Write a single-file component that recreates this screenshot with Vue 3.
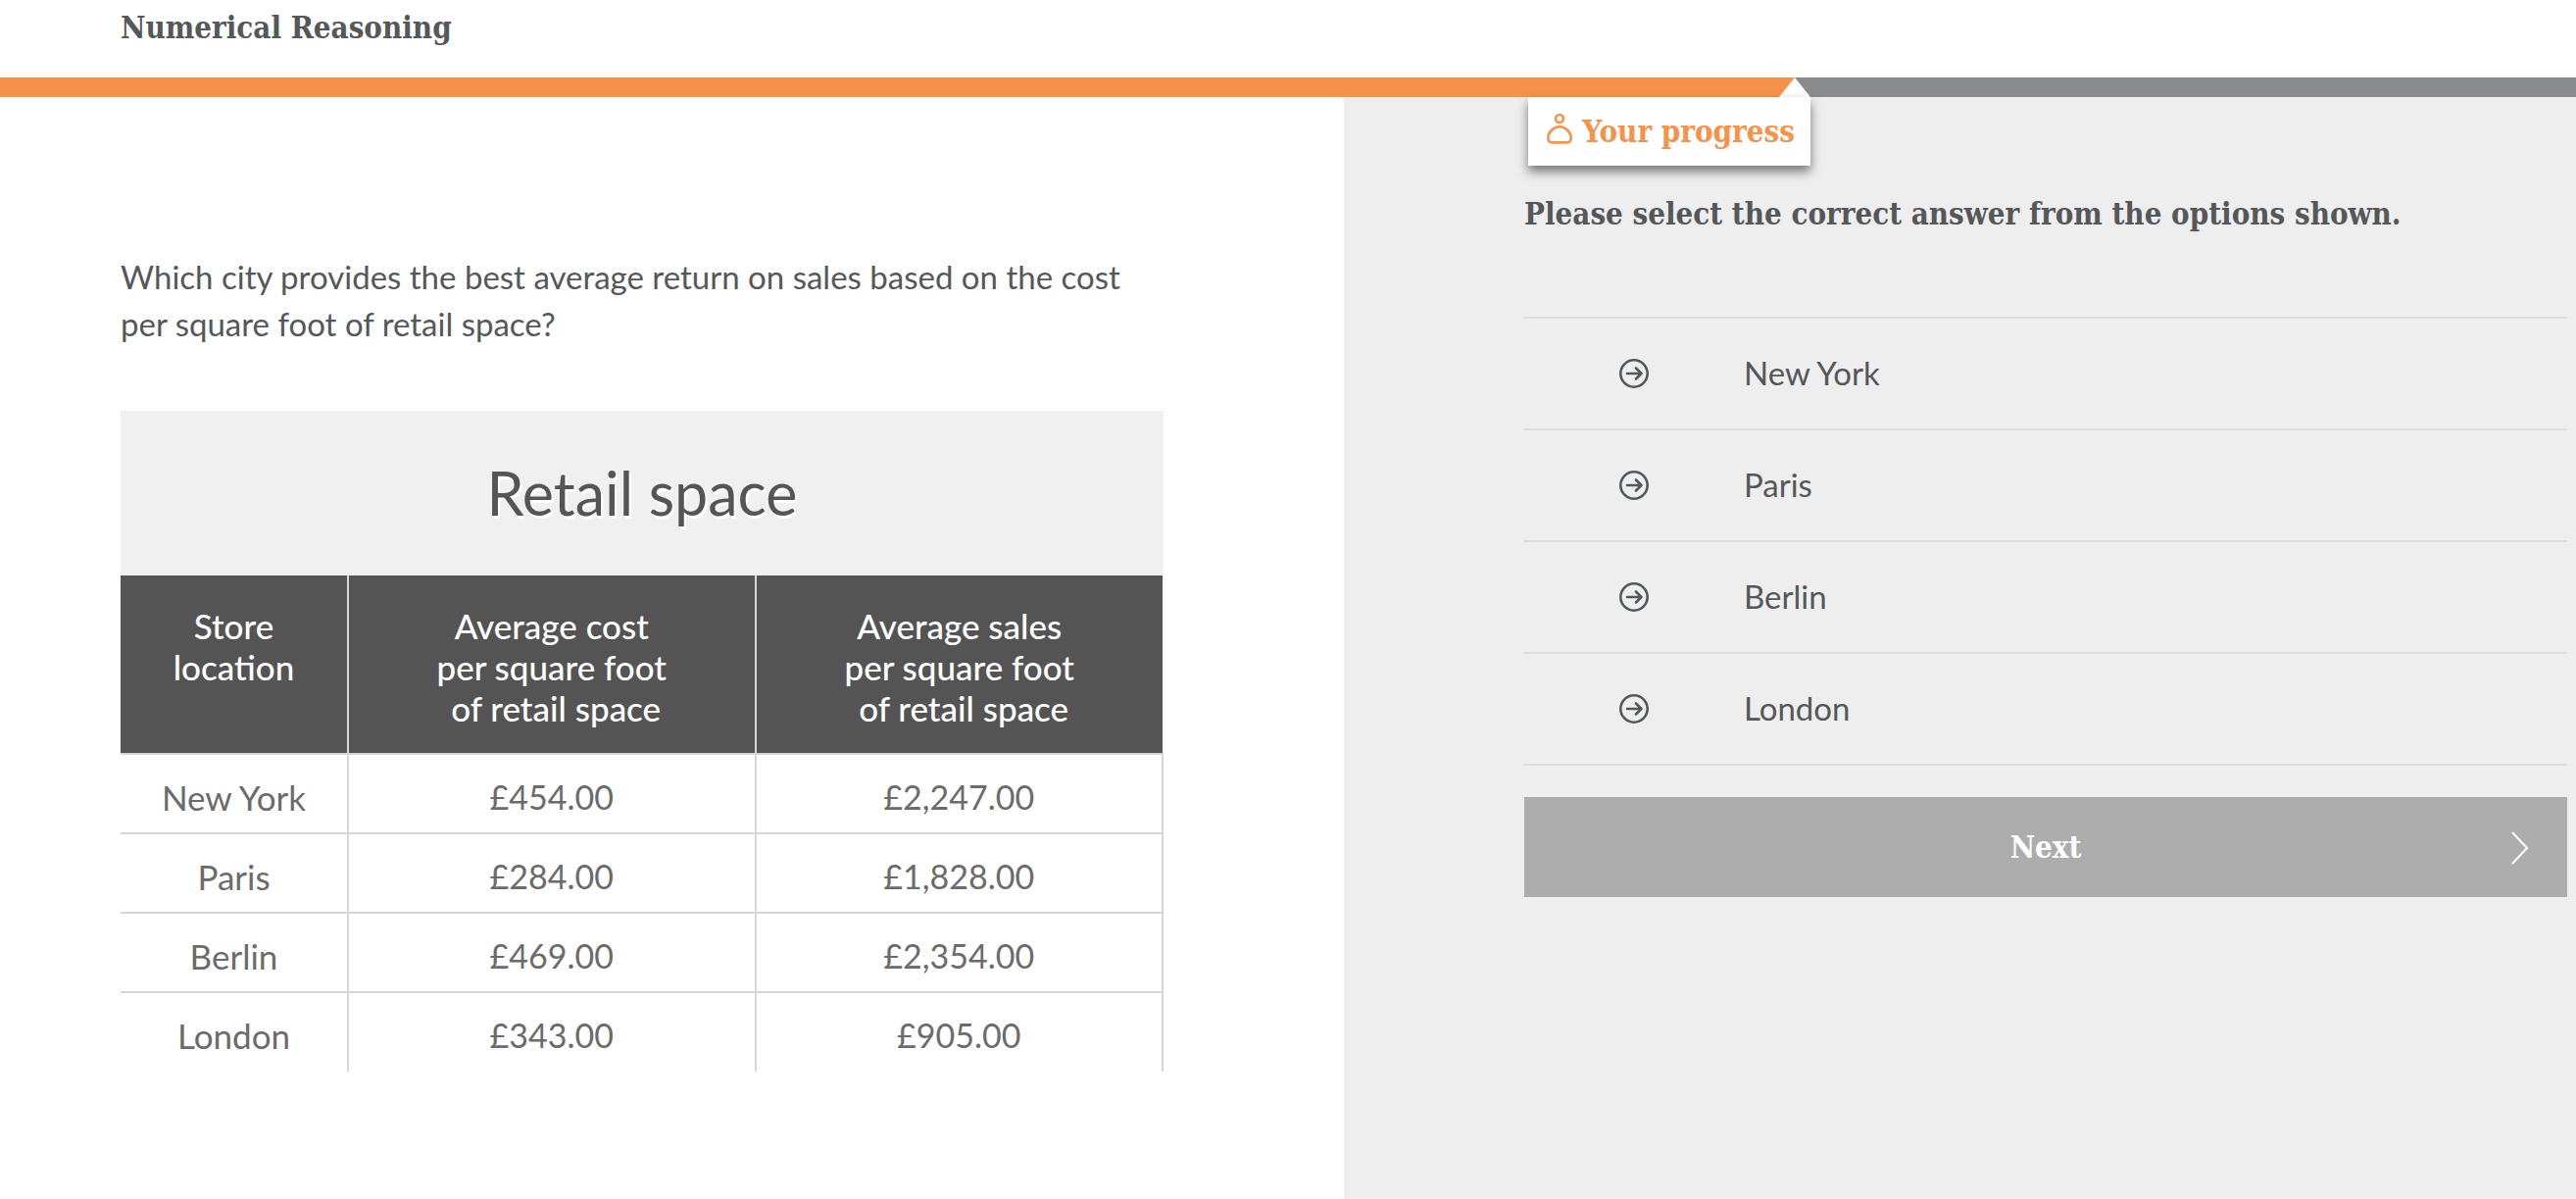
<template>
    <div class="test">
        <header class="test__header">
            <h1 class="test__title">Numerical Reasoning</h1>
        </header>

        <div class="progress" role="progressbar" aria-label="Your progress" :aria-valuenow="progress">
            <div class="progress__fill" :style="{ width: `${progress}%` }">
                <svg class="progress__pointer" viewBox="0 0 32 20" aria-hidden="true">
                    <path d="M0 20 L16 0 L32 20 Z" fill="#fff" />
                </svg>
                <div class="progress__tip">
                    <svg class="progress__icon" viewBox="0 0 28 32" aria-hidden="true">
                        <circle cx="14" cy="6" r="4" />
                        <path d="M14 14.3 C20 14.3 25.7 19.5 25.7 26 C25.7 29 24.3 30.4 21.5 30.4 H6.5 C3.7 30.4 2.3 29 2.3 26 C2.3 19.5 8 14.3 14 14.3 Z" />
                    </svg>
                    <span>Your progress</span>
                </div>
            </div>
        </div>

        <main class="test__body">
            <section class="question">
                <p class="question__text">
                    Which city provides the best average return on sales based on the cost<br />
                    per square foot of retail space?
                </p>

                <table class="data">
                    <caption class="data__caption">Retail space</caption>
                    <thead>
                        <tr>
                            <th class="data__place" scope="col">Store<br />location</th>
                            <th scope="col">Average cost<br />per square foot<br />&nbsp;of retail space</th>
                            <th scope="col">Average sales<br />per square foot<br />&nbsp;of retail space</th>
                        </tr>
                    </thead>
                    <tbody>
                        <tr v-for="store in stores" :key="store.city">
                            <td class="data__city">{{ store.city }}</td>
                            <td>{{ store.cost }}</td>
                            <td>{{ store.sales }}</td>
                        </tr>
                    </tbody>
                </table>
            </section>

            <form class="answers" @submit.prevent>
                <h2 class="answers__title">Please select the correct answer from the options shown.</h2>

                <ul class="answers__list">
                    <li v-for="store in stores" :key="store.city" class="answers__item">
                        <label class="option">
                            <span class="option__mark">
                                <input v-model="selected" class="option__input" type="radio" name="answer" :value="store.city" />
                                <svg class="option__icon" viewBox="0 0 30 30" aria-hidden="true">
                                    <circle cx="15" cy="15" r="13.7" />
                                    <path d="M8 15 H22.5 M17 9.5 L22.5 15 L17 20.5" />
                                </svg>
                            </span>
                            <span class="option__text">{{ store.city }}</span>
                        </label>
                    </li>
                </ul>

                <button class="next" type="submit">
                    <span>Next</span>
                    <svg class="next__icon" viewBox="0 0 18 34" aria-hidden="true">
                        <path d="M1 1 L16 17 L1 33" />
                    </svg>
                </button>
            </form>
        </main>
    </div>
</template>

<script setup>
import { ref } from 'vue'

const progress = ref(69.67)
const selected = ref('')

const stores = [
    { city: 'New York', cost: '£454.00', sales: '£2,247.00' },
    { city: 'Paris', cost: '£284.00', sales: '£1,828.00' },
    { city: 'Berlin', cost: '£469.00', sales: '£2,354.00' },
    { city: 'London', cost: '£343.00', sales: '£905.00' }
]
</script>

<style>
body {
    margin: 0;
    background: #fff;
}
</style>

<style scoped>
.test {
    display: flex;
    flex-direction: column;
    min-height: 100vh;
    font-family: 'Lato', 'Open Sans', sans-serif;
    font-size: 33px;
    line-height: 48px;
    color: #54585a;
}

.test__header {
    height: 79px;
    padding-left: 123px;
    box-sizing: border-box;
}

.test__title,
.answers__title {
    margin: 0;
    font-family: 'DejaVu Serif Condensed', 'DejaVu Serif', serif;
    font-size: 31px;
    font-weight: bold;
    line-height: 56px;
}

.progress {
    height: 20px;
    background: #8a8b8c;
}

.progress__fill {
    position: relative;
    height: 20px;
    background: #f7924a;
}

.progress__pointer {
    position: absolute;
    top: 0;
    right: -16px;
    width: 32px;
    height: 20px;
}

/* The tip hangs below the bar, over the answers panel */
.progress__tip {
    position: absolute;
    top: 20px;
    right: -16px;
    z-index: 1;
    display: flex;
    align-items: center;
    gap: 9px;
    height: 70px;
    padding: 0 16px 0 18px;
    box-sizing: border-box;
    background: #fff;
    box-shadow: 0 6px 10px rgba(0, 0, 0, 0.5);
    font-family: 'DejaVu Serif Condensed', 'DejaVu Serif', serif;
    font-size: 31px;
    font-weight: bold;
    white-space: nowrap;
    color: #f7924a;
}

.progress__icon {
    width: 28px;
    height: 32px;
    margin-bottom: 6px;
    fill: none;
    stroke: #f7924a;
    stroke-width: 2.6;
}

.test__body {
    flex: 1;
    display: grid;
    grid-template-columns: 1371fr 1257fr;
}

.question {
    padding: 159px 184px 40px 123px;
}

.question__text {
    margin: 0 0 65px;
    white-space: nowrap;
}

.data {
    width: 100%;
    table-layout: fixed;
    border-collapse: collapse;
    font-size: 34px;
    text-align: center;
    color: #6b6b6b;
}

.data__caption {
    padding: 54px 0;
    background: #f0f0f0;
    font-size: 61px;
    line-height: 60px;
    text-shadow: 2px 3px 0 #fff;
    color: #555;
}

.data__place {
    width: 232px;
}

.data th {
    height: 182px;
    padding: 30px 0 0;
    box-sizing: border-box;
    border-left: 2px solid #d8d8d8;
    background: #545454;
    font-size: 35px;
    font-weight: 500;
    line-height: 42px;
    vertical-align: top;
    color: #fff;
}

.data td {
    height: 81px;
    padding: 6px 0 0;
    box-sizing: border-box;
    border-top: 2px solid #d6d6d6;
    border-right: 2px solid #d6d6d6;
}

.data th:first-child {
    border-left: 0;
}

.data .data__city {
    font-size: 35px;
}

.answers {
    padding: 91px 9px 0 184px;
    background: #eee;
}

.answers__list {
    margin: 77px 0 32px;
    padding: 0;
    list-style: none;
    border-top: 2px solid #dcdcdc;
}

.answers__item {
    border-bottom: 2px solid #dcdcdc;
}

.option {
    display: flex;
    align-items: center;
    gap: 97px;
    height: 112px;
    padding-left: 97px;
    cursor: pointer;
}

.option__mark {
    position: relative;
    width: 30px;
    height: 30px;
}

.option__text {
    padding-bottom: 2px;
}

.option__input {
    position: absolute;
    inset: 0;
    width: 30px;
    height: 30px;
    margin: 0;
    opacity: 0;
}

.option__icon {
    display: block;
    width: 30px;
    height: 30px;
    fill: none;
    stroke: #54585a;
    stroke-width: 2.6;
    stroke-linecap: round;
    stroke-linejoin: round;
}

.next {
    position: relative;
    width: 100%;
    height: 102px;
    border: 0;
    background: #adadad;
    font-family: 'DejaVu Serif Condensed', 'DejaVu Serif', serif;
    font-size: 31px;
    font-weight: bold;
    color: #fff;
    cursor: pointer;
}

.next__icon {
    position: absolute;
    top: 35px;
    right: 39px;
    width: 18px;
    height: 34px;
    fill: none;
    stroke: #fff;
    stroke-width: 2;
}
</style>
